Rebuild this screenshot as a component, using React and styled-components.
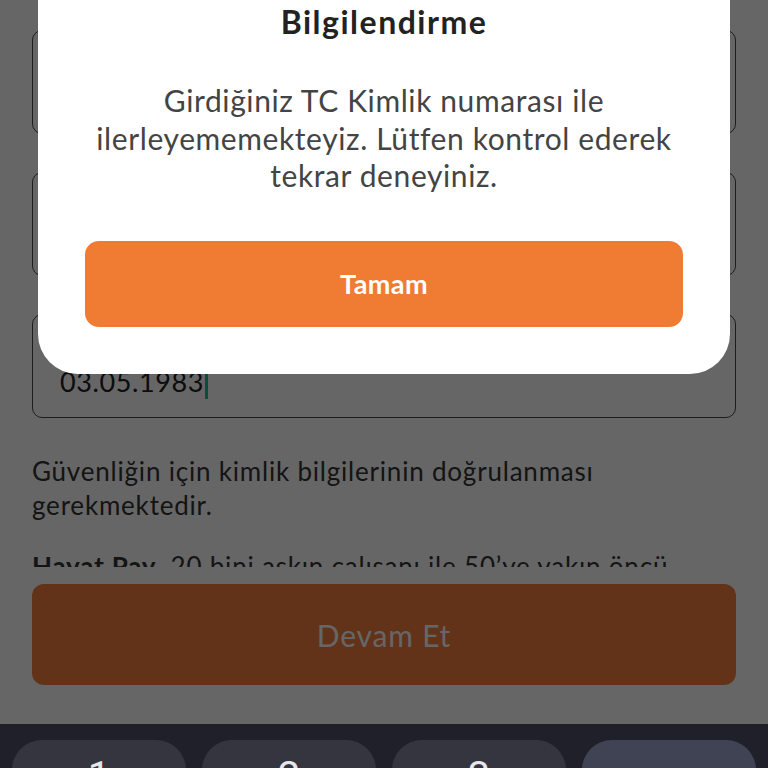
import styled, { createGlobalStyle } from "styled-components";

const GlobalStyle = createGlobalStyle`
  * {
    box-sizing: border-box;
  }
  html, body {
    margin: 0;
    width: 768px;
    height: 768px;
    overflow: hidden;
    background: #ffffff;
    font-family: Lato, "Noto Sans", sans-serif;
  }
`;

const fields = [
  { label: "TC Kimlik No", value: "12345678901" },
  { label: "Cep Telefonu", value: "0532 000 00 00" },
  { label: "Doğum Tarihi", value: "03.05.1983", focused: true },
];

const keys = [
  { label: "1" },
  { label: "2" },
  { label: "3" },
  { label: "", action: true },
];

export default function App() {
  return (
    <>
      <GlobalStyle />
      <Screen>
        <Page>
          <Content>
            <FieldList>
              {fields.map((f) => (
                <Field key={f.label}>
                  <FieldLabel>{f.label}</FieldLabel>
                  <FieldValue>
                    {f.value}
                    {f.focused && <Caret />}
                  </FieldValue>
                </Field>
              ))}
            </FieldList>
            <Paragraph>
              Güvenliğin için kimlik bilgilerinin doğrulanması gerekmektedir.
            </Paragraph>
            <Paragraph>
              <b>Hayat Pay</b>, 20 bini aşkın çalışanı ile 50’ye yakın öncü
              markayı bünyesinde barındıran Hayat Holding’in finansal
              teknoloji şirketidir.
            </Paragraph>
          </Content>
          <ContinueButton disabled>Devam Et</ContinueButton>

          <Backdrop />
          <Dialog>
            <DialogTitle>Bilgilendirme</DialogTitle>
            <DialogText>
              Girdiğiniz TC Kimlik numarası ile ilerleyememekteyiz. Lütfen
              kontrol ederek tekrar deneyiniz.
            </DialogText>
            <OkButton>Tamam</OkButton>
          </Dialog>
        </Page>

        <Keyboard>
          {keys.map((k, i) => (
            <Key key={i} $action={k.action}>
              {k.label}
            </Key>
          ))}
        </Keyboard>
      </Screen>
    </>
  );
}

const Screen = styled.div`
  display: flex;
  flex-direction: column;
  width: 768px;
  height: 768px;
  overflow: hidden;
`;

const Page = styled.div`
  position: relative;
  display: flex;
  flex-direction: column;
  height: 724px;
  flex-shrink: 0;
  padding: 0 32px;
  background: #ffffff;
`;

const Content = styled.div`
  height: 567px;
  overflow: hidden;
  padding-top: 30px;
`;

const FieldList = styled.div`
  display: flex;
  flex-direction: column;
  gap: 38px;
`;

const Field = styled.div`
  height: 104px;
  border: 1.5px solid #4a4a4a;
  border-radius: 10px;
  padding: 14px 27px 0;
  display: flex;
  flex-direction: column;
  gap: 6px;
`;

const FieldLabel = styled.span`
  font-size: 18px;
  line-height: 22px;
  color: #777777;
`;

const FieldValue = styled.span`
  display: flex;
  align-items: center;
  font-size: 27px;
  letter-spacing: 0.6px;
  line-height: 34px;
  margin-top: 8px;
  color: #222222;
`;

const Caret = styled.span`
  display: inline-block;
  width: 3px;
  height: 28px;
  margin-left: 1px;
  margin-top: 6px;
  background: #1cbf91;
`;

const Paragraph = styled.p`
  margin: 36px 0 0;
  font-size: 26px;
  letter-spacing: 0.8px;
  line-height: 34px;
  color: #333333;

  & + & {
    margin-top: 27px;
  }

  b {
    font-weight: 700;
  }
`;

const ContinueButton = styled.button`
  margin-top: 17px;
  height: 101px;
  width: 100%;
  border: none;
  border-radius: 12px;
  background: #f67d40;
  font-family: Lato, "Noto Sans", sans-serif;
  font-size: 30px;
  letter-spacing: 0.8px;
  color: #ffffff;
`;

const Backdrop = styled.div`
  position: absolute;
  inset: 0;
  background: rgba(0, 0, 0, 0.6);
`;

const Dialog = styled.div`
  position: absolute;
  top: -40px;
  left: 38px;
  right: 38px;
  display: flex;
  flex-direction: column;
  align-items: center;
  padding: 44px 47px 47px;
  background: #ffffff;
  border-radius: 40px;
`;

const DialogTitle = styled.h2`
  margin: 0;
  font-size: 32px;
  letter-spacing: 1.5px;
  line-height: 36px;
  font-weight: 700;
  color: #222222;
`;

const DialogText = styled.p`
  margin: 42px 0 0;
  font-size: 30px;
  letter-spacing: 0.6px;
  line-height: 37.5px;
  text-align: center;
  color: #444444;
`;

const OkButton = styled.button`
  margin-top: 46px;
  width: 100%;
  height: 86px;
  border: none;
  border-radius: 14px;
  background: #f07b33;
  font-family: Lato, "Noto Sans", sans-serif;
  font-size: 27px;
  letter-spacing: 0.4px;
  font-weight: 700;
  color: #ffffff;
`;

const Keyboard = styled.div`
  flex: 1;
  display: grid;
  grid-template-columns: repeat(4, 1fr);
  gap: 16px;
  padding: 16px 12px 0;
  background: #1f2029;
  overflow: hidden;
`;

const Key = styled.div`
  height: 90px;
  border-radius: 30px;
  background: ${(p) => (p.$action ? "#3f4354" : "#34353f")};
  color: #e6e6ea;
  font-family: Roboto, "Noto Sans", sans-serif;
  font-size: 40px;
  line-height: 40px;
  text-align: center;
  padding-top: 17px;
`;
